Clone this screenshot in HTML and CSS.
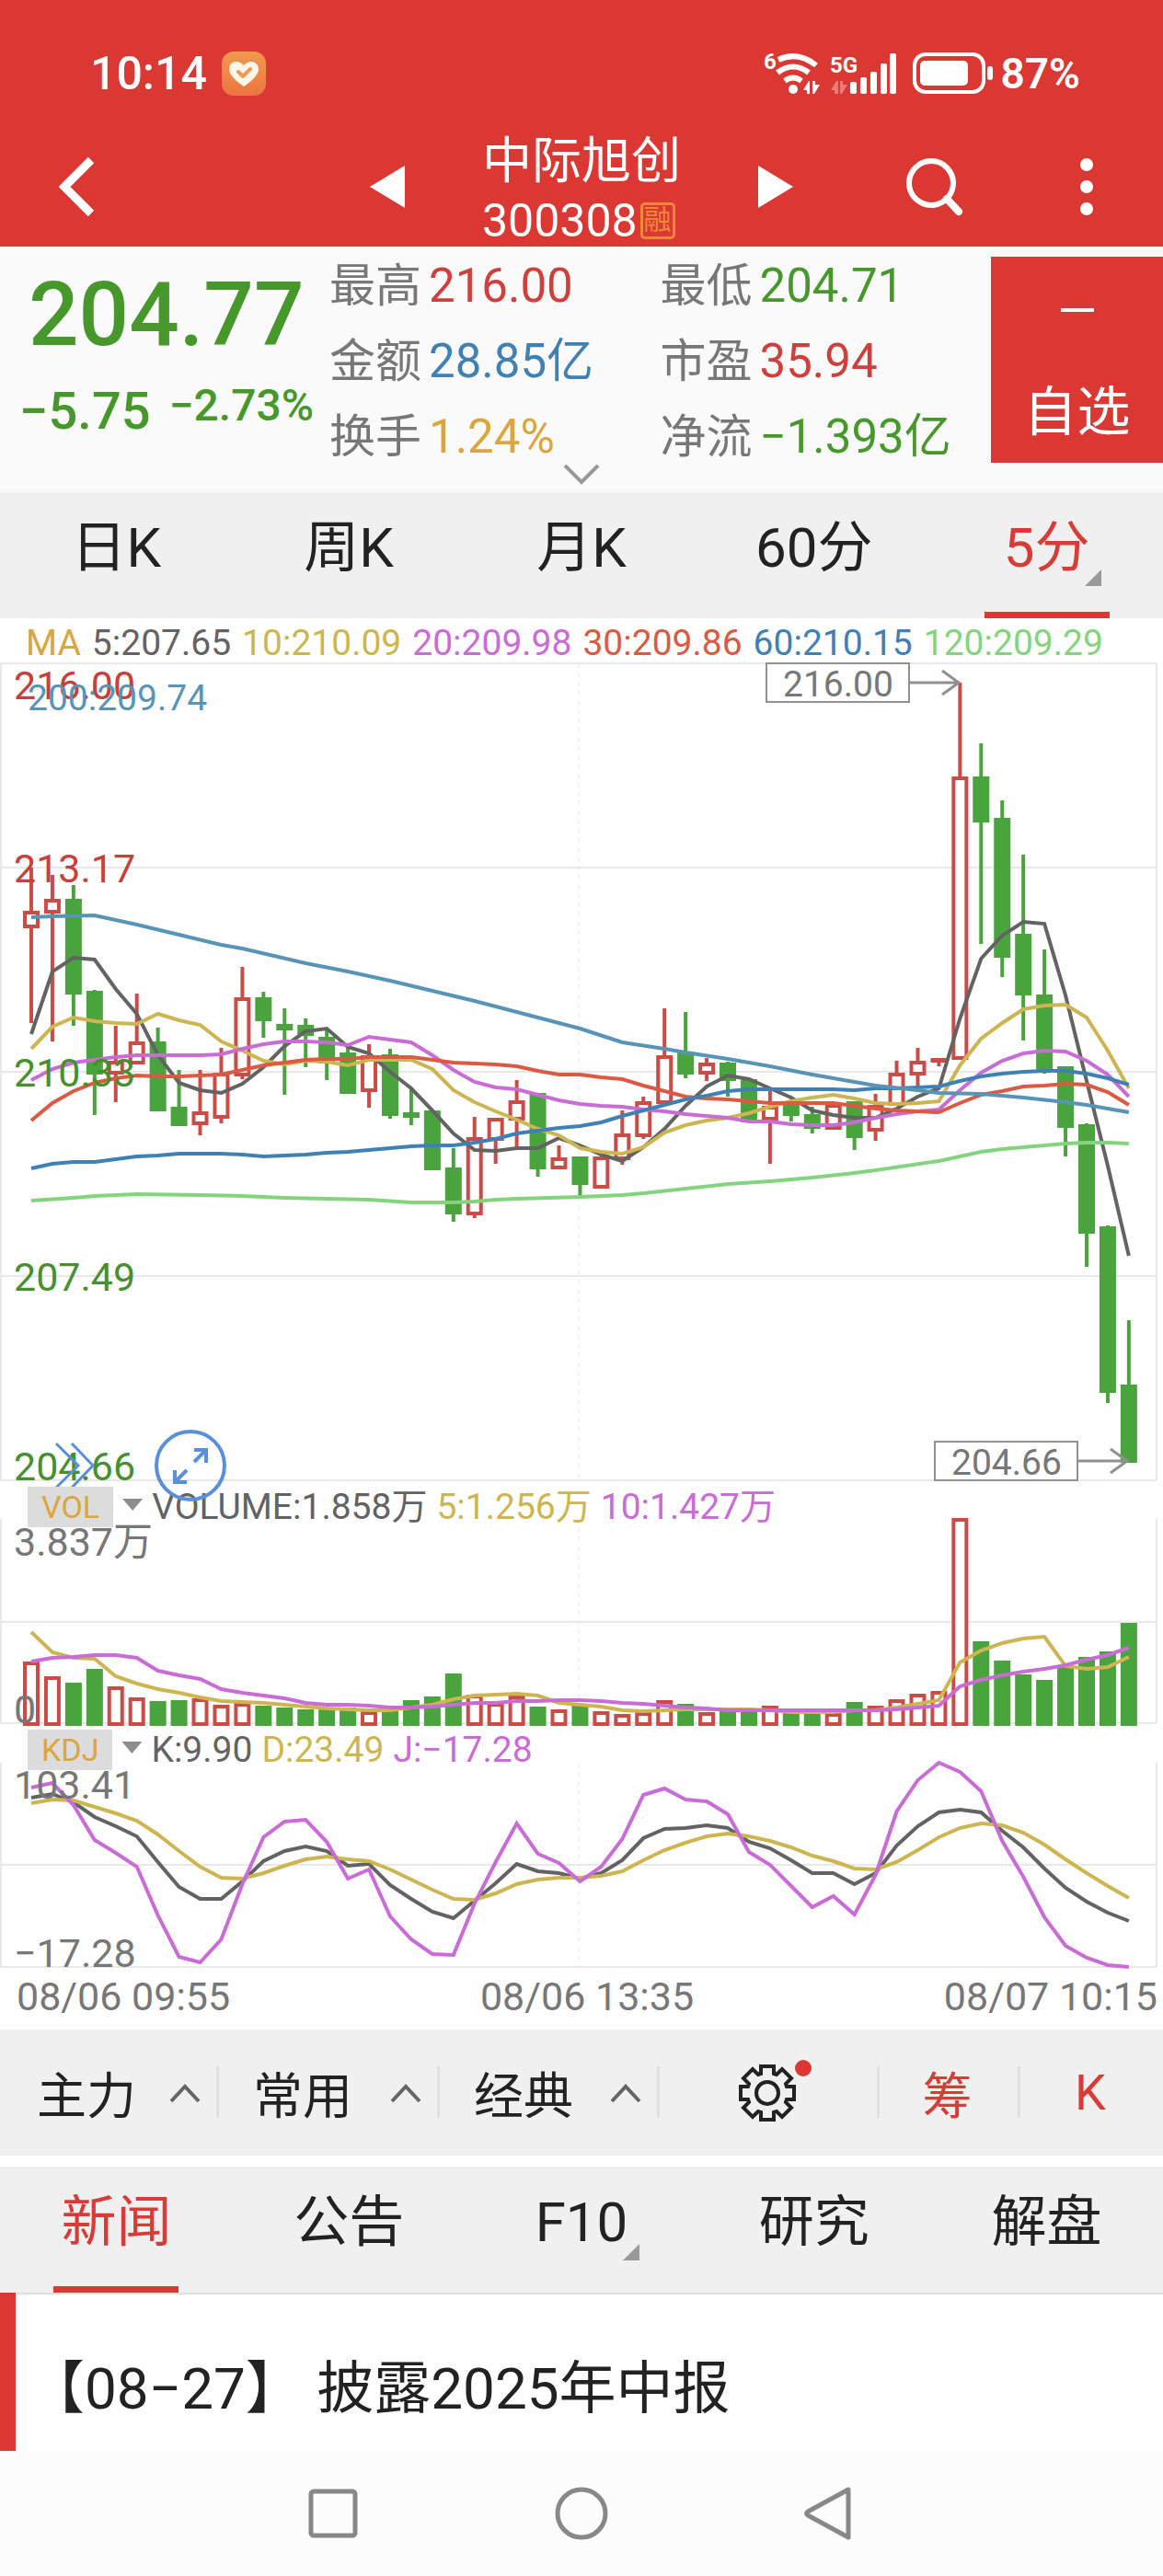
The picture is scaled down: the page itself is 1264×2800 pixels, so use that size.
FILE: index.html
```html
<!DOCTYPE html>
<html lang="zh-CN">
<head>
<meta charset="utf-8">
<meta name="viewport" content="width=device-width, initial-scale=1">
<title>中际旭创 300308</title>
<link rel="stylesheet" href="styles.css">
</head>
<body>
<header class="top">
  <div class="status">
    <span class="clock">10:14</span>
    <svg class="app-badge" width="48" height="48" viewBox="0 0 48 48">
      <defs><linearGradient id="og" x1="0" y1="0" x2="0" y2="1"><stop offset="0" stop-color="#f2994f"/><stop offset="1" stop-color="#ec7440"/></linearGradient></defs>
      <rect width="48" height="48" rx="13" fill="url(#og)"/>
      <path d="M24 38C14 31 8 25 8 19c0-5 4-8 8-8 3 0 6 2 8 4 2-2 5-4 8-4 4 0 8 3 8 8 0 6-6 12-16 19z" fill="#fff6ea"/>
      <path d="M18 22l5 5 8-8" fill="none" stroke="#ee9a52" stroke-width="4" stroke-linecap="round" stroke-linejoin="round"/>
    </svg>
    <svg class="signals" width="256" height="60" viewBox="824 49 256 60" fill="#fff">
      <text x="830" y="74" class="sig-text">6</text>
      <g fill="none" stroke="#fff" stroke-width="6">
        <path d="M846 64q21-10 41 6"/><path d="M845 78q17-13 34 0"/><path d="M853 87q9-7 18 0"/>
      </g>
      <circle cx="862" cy="96" r="5"/>
      <path d="M873 97l6-10h1v14h-3v-4zM891 91l-6 10h-2V87h3v4z"/>
      <text x="902" y="78" class="sig-text">5G</text>
      <path d="M903 97l6-10h2v14h-4v-4zM921 91l-6 10h-2V87h3v4z" opacity=".35"/>
      <g><rect x="924" y="88" width="7" height="13" rx="2"/><rect x="935" y="83" width="7" height="18" rx="2"/><rect x="946" y="77" width="7" height="24" rx="2"/><rect x="957" y="68" width="7" height="33" rx="2"/><rect x="967" y="57" width="7" height="44" rx="2"/></g>
      <rect x="994" y="58" width="75" height="41" rx="12" fill="none" stroke="#fff" stroke-width="4"/>
      <rect x="1000" y="65" width="52" height="27" rx="5"/>
      <rect x="1073" y="71" width="6" height="15" rx="3"/>
    </svg>
    <span class="battery">87%</span>
  </div>
  <nav class="titlebar">
    <button class="icon back" aria-label="返回"><svg width="44" height="68" viewBox="0 0 44 68"><path d="M37 5L8 34l29 29" fill="none" stroke="#fff" stroke-width="9"/></svg></button>
    <div class="stock">
      <button class="icon" aria-label="上一个"><svg width="38" height="46" viewBox="0 0 38 46"><path d="M38 0v46L0 23z" fill="#fff"/></svg></button>
      <div class="stock-name">
        <h1>中际旭创</h1>
        <p>300308<span class="tag">融</span></p>
      </div>
      <button class="icon" aria-label="下一个"><svg width="38" height="46" viewBox="0 0 38 46"><path d="M0 0v46l38-23z" fill="#fff"/></svg></button>
    </div>
    <div class="actions">
      <button class="icon" aria-label="搜索"><svg width="66" height="66" viewBox="0 0 66 66" fill="none" stroke="#fff" stroke-width="6"><circle cx="29" cy="29" r="24"/><path d="M46 46l13 14" stroke-width="8" stroke-linecap="round"/></svg></button>
      <button class="icon" aria-label="更多"><svg width="16" height="66" viewBox="0 0 16 66" fill="#fff"><circle cx="8" cy="9" r="7"/><circle cx="8" cy="33" r="7"/><circle cx="8" cy="57" r="7"/></svg></button>
    </div>
  </nav>
</header>

<section class="quote">
  <div class="price">
    <strong>204.77</strong>
    <div class="change"><span>−5.75</span><span class="pct">−2.73%</span></div>
  </div>
  <dl class="stats">
    <div><dt>最高</dt><dd class="up">216.00</dd></div>
    <div><dt>最低</dt><dd class="down">204.71</dd></div>
    <div><dt>金额</dt><dd class="blue">28.85亿</dd></div>
    <div><dt>市盈</dt><dd class="up">35.94</dd></div>
    <div><dt>换手</dt><dd class="gold">1.24%</dd></div>
    <div><dt>净流</dt><dd class="down">−1.393亿</dd></div>
  </dl>
  <button class="watch"><i></i>自选</button>
  <button class="icon more" aria-label="展开"><svg width="42" height="26" viewBox="0 0 42 26"><path d="M3 3l18 18L39 3" fill="none" stroke="#999" stroke-width="4"/></svg></button>
</section>

<nav class="tabs">
  <a href="#">日K</a><a href="#">周K</a><a href="#">月K</a><a href="#">60分</a><a href="#" class="on"><span class="drop">5分</span></a>
</nav>

<section class="charts">
  <div class="legend ma">
    <span class="gold">MA</span><span class="gray">5:207.65</span><span class="yellow">10:210.09</span><span class="purple">20:209.98</span><span class="orange">30:209.86</span><span class="blue">60:210.15</span><span class="lime">120:209.29</span>
  </div>
  <div class="panel">
    <svg id="price" viewBox="0 720 1264 894"></svg>
    <button class="icon fast" aria-label="快进"><svg width="44" height="50" viewBox="60 1568 44 50" fill="none" stroke="#5a8fdc" stroke-width="3"><path d="M61 1569l24 24-24 24M78 1569l23 24-23 24"/></svg></button>
    <button class="icon expand" aria-label="全屏"><svg width="78" height="78" viewBox="168 1554 78 78" fill="none" stroke="#5a8fdc" stroke-width="4"><circle cx="207" cy="1593" r="37"/><path d="M211 1576h13v14M224 1576l-13 13M190 1598v13h13M190 1611l13-13"/></svg></button>
  </div>
  <div class="legend sub">
    <button class="ind">VOL</button><i class="tri"></i><span class="gray">VOLUME:1.858万</span><span class="yellow">5:1.256万</span><span class="purple">10:1.427万</span>
  </div>
  <svg id="volume" viewBox="0 1650 1264 228"></svg>
  <div class="legend sub">
    <button class="ind">KDJ</button><i class="tri"></i><span class="gray">K:9.90</span><span class="yellow">D:23.49</span><span class="purple">J:−17.28</span>
  </div>
  <svg id="kdj" viewBox="0 1914 1264 226"></svg>
  <div class="dates"><time>08/06 09:55</time><time>08/06 13:35</time><time>08/07 10:15</time></div>
</section>

<div class="toolbar">
  <button class="menu">主力<svg width="34" height="22" viewBox="0 0 34 22"><path d="M2 20L17 4l15 16" /></svg></button>
  <button class="menu">常用<svg width="34" height="22" viewBox="0 0 34 22"><path d="M2 20L17 4l15 16" /></svg></button>
  <button class="menu">经典<svg width="34" height="22" viewBox="0 0 34 22"><path d="M2 20L17 4l15 16" /></svg></button>
  <button class="gear" aria-label="设置">
    <svg width="86" height="74" viewBox="-31 -37 86 74" fill="none" stroke="#222" stroke-width="4">
      <path d="M-7-21V-29H7V-21L10-20 16-26 26-16 20-10 21-7H29V7H21L20 10 26 16 16 26 10 20 7 21V29H-7V21L-10 20-16 26-26 16-20 10-21 7H-29V-7H-21L-20-10-26-16-16-26-10-20z"/><circle r="12"/>
      <circle cx="39" cy="-27" r="9" fill="#db3833" stroke="none"/>
    </svg>
  </button>
  <button class="red">筹</button>
  <button class="red">K</button>
</div>

<nav class="tabs news-tabs">
  <a href="#" class="on">新闻</a><a href="#">公告</a><a href="#"><span class="drop">F10</span></a><a href="#">研究</a><a href="#">解盘</a>
</nav>
<a class="news" href="#">【08−27】 披露2025年中报</a>

<nav class="system">
  <button class="icon" aria-label="最近任务"><svg width="60" height="60" viewBox="0 0 60 60"><rect x="6" y="6" width="48" height="48" rx="3"/></svg></button>
  <button class="icon" aria-label="主页"><svg width="60" height="60" viewBox="0 0 60 60"><circle cx="30" cy="30" r="26"/></svg></button>
  <button class="icon" aria-label="后退"><svg width="60" height="60" viewBox="0 0 60 60"><path d="M50 4v52L6 32q-3-2 0-4z" stroke-linejoin="round"/></svg></button>
</nav>
<script src="charts.js"></script>
</body>
</html>
```

FILE: styles.css
```css
* { box-sizing: border-box; }
body {
  margin: 0;
  background: #fefefe;
  color: #222;
  font-family: Roboto, "Noto Sans CJK SC", sans-serif;
}
button { margin: 0; padding: 0; border: 0; background: none; color: inherit; font: inherit; }
a { color: inherit; text-decoration: none; }
svg { display: block; }
.icon { display: flex; align-items: center; justify-content: center; }

.up { color: #cf403c; }
.down { color: #46982a; }
.gold { color: #dba63f; }
.gray { color: #636363; }
.yellow { color: #cdb651; }
.purple { color: #c96cd6; }
.orange { color: #d95b41; }
.blue { color: #3f80b5; }
.lime { color: #84d47f; }
.red { color: #d93c36; }

.top { background: #db3833; color: #fff; height: 268px; }
.status {
  display: flex;
  align-items: center;
  padding: 52px 90px 0 98px;
  height: 108px;
  font-weight: 500;
}
.clock { font-size: 50px; }
.app-badge { margin-left: 16px; }
.signals { margin-left: auto; }
.battery { margin-left: 8px; font-size: 46px; font-weight: 600; }
.sig-text { font: 700 24px Roboto, sans-serif; }
.titlebar {
  display: grid;
  grid-template-columns: 1fr auto 1fr;
  height: 160px;
  align-items: center;
  padding: 26px 62px 0;
}
.back { justify-self: start; }
.stock { display: flex; align-items: center; gap: 84px; }
.stock h1, .stock p { margin: 0; line-height: 64px; font-weight: 400; }
.stock-name { margin-top: 10px; }
.stock h1 { font-size: 54px; }
.stock p { display: flex; align-items: center; font-size: 50px; gap: 3px; }
.tag {
  width: 38px;
  height: 40px;
  border: 3px solid #f0883a;
  border-radius: 5px;
  color: #f0883a;
  font-size: 30px;
  line-height: 32px;
  text-align: center;
}
.actions { display: flex; justify-content: flex-end; gap: 124px; padding-right: 13px; }

.quote {
  position: relative;
  display: flex;
  height: 267px;
  background: #fafafa;
}
.price { width: 358px; padding: 18px 0 0 21px; color: #46982a; font-weight: 500; white-space: nowrap; }
.price strong { display: block; padding-left: 10px; font-size: 96px; font-weight: 500; line-height: 112px; }
.change { display: flex; align-items: center; gap: 20px; margin-top: 16px; font-size: 56px; line-height: 66px; }
.pct { margin-top: -12px; font-size: 48px; }
.stats {
  flex: 1;
  display: grid;
  grid-template-columns: 1fr 1fr;
  grid-auto-rows: 82px;
  margin: 2px 0 0;
  font-size: 50px;
  line-height: 82px;
  white-space: nowrap;
}
.stats div { display: flex; gap: 8px; }
.stats dt { color: #777; }
.stats dd { margin: 0; font-size: 51px; }
.watch {
  display: flex;
  flex-direction: column;
  align-items: center;
  justify-content: space-between;
  width: 187px;
  height: 224px;
  margin-top: 11px;
  padding: 56px 0 22px;
  background: #db3833;
  color: #fff;
  font-size: 58px;
  line-height: 66px;
}
.watch i { width: 36px; height: 4px; background: #fff; }
.more { position: absolute; left: calc(50% - 21px); bottom: 6px; }

.tabs {
  display: grid;
  grid-template-columns: repeat(5, 1fr);
  height: 137px;
  background: #f0f0f0;
  font-size: 60px;
  line-height: 122px;
  text-align: center;
}
.on { position: relative; color: #d93c36; }
.on::before {
  content: "";
  position: absolute;
  left: calc(50% - 68px);
  bottom: 0;
  width: 136px;
  height: 7px;
  background: #db3833;
}
.drop { position: relative; }
.drop::after {
  content: "";
  position: absolute;
  right: -13px;
  bottom: -6px;
  border: solid transparent;
  border-width: 9px;
  border-right-color: #999;
  border-bottom-color: #999;
}

.charts svg { width: 100%; overflow: visible; }
.charts button svg { width: auto; }
.legend { display: flex; font-size: 39px; white-space: nowrap; }
.ma { height: 48px; padding-left: 28px; gap: 12px; line-height: 54px; }
.sub { position: relative; z-index: 1; height: 36px; padding: 2px 0 0 30px; gap: 10px; line-height: 44px; }
.ind {
  height: 44px;
  padding: 0 15px;
  background: #dcdcdc;
  color: #dba63f;
  font-size: 34px;
}
.tri { width: 22px; height: 13px; margin: 13px 0 0; background: #8e8e8e; clip-path: polygon(0 0, 100% 0, 50% 100%); }
.panel { position: relative; }
.fast { position: absolute; left: 60px; bottom: -4px; }
.expand { position: absolute; left: 168px; bottom: -18px; z-index: 2; }
.axis { font: 43px Roboto, "Noto Sans CJK SC", sans-serif; }
.small { font-size: 39px; }
.dates {
  display: flex;
  justify-content: space-between;
  height: 66px;
  padding: 0 6px 0 18px;
  color: #777;
  font-size: 43px;
  line-height: 61px;
}

.toolbar {
  display: grid;
  grid-template-columns: 235fr 240fr 239fr 239fr 153fr 158fr;
  height: 137px;
  background: #f0f0f0;
  font-size: 54px;
}
.toolbar button { position: relative; display: flex; align-items: center; justify-content: center; }
.toolbar button + button::before {
  content: "";
  position: absolute;
  left: 0;
  top: 40px;
  width: 3px;
  height: 56px;
  background: #e0e0e0;
}
.toolbar .menu { justify-content: space-between; padding: 0 17px 0 40px; }
.menu path { fill: none; stroke: #666; stroke-width: 4; }
.gear svg { margin-left: 24px; }

.news-tabs { margin-top: 12px; }
.news {
  display: block;
  height: 172px;
  padding-left: 13px;
  border-left: 17px solid #db3833;
  box-shadow: inset 0 2px #e0e0e0;
  font-size: 62px;
  line-height: 210px;
  white-space: pre;
}
.system {
  display: flex;
  justify-content: center;
  gap: 210px;
  height: 136px;
  background: #fcfcfc;
}
.system svg { fill: none; stroke: #888; stroke-width: 5; }
```

FILE: charts.js
```javascript
const RED = "#cb4c47", GREEN = "#4aa43e", GRAY = "#636363", YELLOW = "#cdb651",
  PURPLE = "#c96cd6", ORANGE = "#dc5a43", BLUE = "#3f80b5", LIME = "#84d47f", STEEL = "#5794b6";

const STEP = 22.94, FIRST = 34;
const xAt = i => FIRST + i * STEP;

// Rows: direction (1 = rise), high, body top, body bottom, low
const candles = [
  [1,943,990,1009,1112],[1,951,977,993,1132],[0,962,977,1081,1115],[0,1076,1077,1168,1212],
  [1,1115,1153,1168,1198],[1,1080,1132,1157,1157],[0,1117,1132,1208,1208],[0,1163,1203,1224,1224],
  [1,1163,1208,1223,1234],[1,1139,1166,1216,1221],[1,1051,1084,1170,1173],[0,1078,1084,1110,1128],
  [0,1096,1113,1120,1190],[0,1107,1114,1126,1160],[0,1120,1127,1156,1174],[0,1137,1144,1189,1189],
  [1,1135,1147,1187,1204],[0,1140,1146,1213,1216],[0,1182,1209,1215,1223],[0,1207,1207,1272,1272],
  [0,1248,1269,1320,1328],[1,1214,1236,1321,1324],[1,1215,1215,1240,1265],[1,1174,1196,1218,1247],
  [0,1188,1188,1271,1279],[1,1245,1258,1271,1271],[0,1257,1257,1288,1299],[1,1257,1257,1292,1292],
  [1,1207,1232,1261,1266],[1,1192,1197,1236,1238],[1,1096,1147,1200,1200],[0,1100,1143,1168,1172],
  [1,1150,1155,1168,1175],[0,1154,1155,1175,1192],[0,1173,1173,1220,1220],[1,1186,1202,1218,1265],
  [0,1195,1200,1213,1219],[0,1203,1211,1227,1232],[1,1200,1200,1228,1228],[0,1197,1197,1237,1250],
  [1,1189,1201,1230,1240],[1,1153,1166,1202,1202],[1,1139,1153,1169,1182],[1,1150,1150,1155,1159],
  [1,742,844,1152,1152],[0,808,844,894,1026],[0,870,889,1041,1062],[0,929,1015,1082,1131],
  [0,1032,1081,1166,1167],[0,1159,1159,1226,1257],[0,1221,1222,1341,1377],[0,1332,1333,1514,1525],
  [0,1435,1505,1590,1590]
];
const ma5 = [1124,1056,1041,1043,1075,1102,1147,1177,1185,1188,1178,1160,1137,1121,1118,1138,1145,1165,1183,1207,1232,1250,1251,1248,1248,1237,1245,1255,1262,1247,1227,1202,1181,1169,1173,1183,1193,1207,1212,1215,1215,1205,1192,1183,1107,1042,1017,1002,1004,1082,1175,1267,1365];
const ma10 = [1140,1116,1106,1110,1112,1113,1102,1109,1114,1132,1142,1153,1157,1153,1154,1158,1152,1152,1152,1162,1185,1198,1208,1217,1227,1234,1248,1252,1254,1247,1231,1223,1218,1215,1210,1203,1197,1193,1190,1194,1199,1200,1199,1197,1158,1129,1112,1097,1093,1092,1106,1142,1183];
const ma20 = [1174,1162,1155,1152,1149,1147,1147,1147,1147,1146,1140,1135,1132,1132,1133,1136,1127,1130,1133,1147,1163,1176,1182,1184,1190,1196,1200,1202,1203,1206,1208,1211,1213,1215,1219,1219,1222,1223,1223,1220,1215,1211,1208,1206,1185,1166,1153,1145,1142,1143,1153,1168,1192];
const ma30 = [1218,1199,1186,1177,1172,1169,1170,1170,1169,1168,1163,1158,1155,1152,1151,1151,1149,1149,1149,1152,1155,1156,1157,1159,1164,1168,1168,1171,1173,1180,1186,1192,1194,1195,1197,1199,1199,1199,1199,1202,1205,1207,1208,1209,1199,1190,1186,1181,1180,1178,1179,1187,1201];
const ma60 = [1270,1265,1263,1263,1260,1257,1256,1254,1254,1254,1255,1257,1256,1255,1253,1252,1250,1248,1246,1245,1245,1242,1238,1232,1229,1226,1224,1220,1213,1207,1201,1195,1191,1186,1184,1184,1184,1184,1184,1185,1183,1183,1182,1181,1175,1170,1167,1165,1164,1164,1167,1172,1179];
// The slow averages are stored as [index, y] where the slope changes
const ma120 = [[0,1305],[2,1302],[3,1300],[5,1298],[8,1299],[10,1300],[12,1302],[14,1303],[16,1304],[18,1307],[20,1307],[21,1306],[22,1304],[23,1303],[26,1301],[28,1299],[29,1297],[31,1292],[33,1287],[35,1284],[37,1280],[39,1275],[40,1272],[43,1262],[44,1257],[45,1252],[46,1249],[47,1247],[48,1245],[49,1243],[50,1242],[51,1242],[52,1243]];
const ma200 = [[0,997],[1,996],[3,995],[5,1005],[7,1016],[9,1027],[10,1031],[13,1047],[15,1056],[17,1066],[19,1077],[21,1088],[23,1100],[25,1112],[26,1118],[28,1133],[30,1140],[31,1144],[33,1151],[35,1159],[37,1168],[39,1176],[40,1180],[42,1185],[43,1188],[45,1189],[47,1193],[49,1198],[50,1201],[52,1209]];

const volumes = [1806,1822,1829,1814,1833,1845,1849,1848,1846,1853,1851,1854,1856,1858,1857,1856,1860,1860,1848,1844,1819,1842,1851,1843,1855,1858,1853,1860,1863,1861,1848,1852,1861,1857,1860,1854,1862,1861,1862,1850,1854,1847,1841,1838,1650,1784,1805,1820,1826,1812,1801,1795,1764];
const vol5 = [1774,1796,1802,1803,1822,1830,1836,1840,1845,1849,1850,1851,1853,1855,1857,1858,1859,1859,1856,1853,1847,1843,1842,1841,1843,1851,1853,1855,1859,1860,1859,1858,1858,1858,1858,1859,1861,1861,1861,1859,1859,1856,1852,1848,1807,1794,1786,1781,1779,1811,1814,1812,1801];
const vol10 = [1806,1802,1801,1799,1799,1802,1816,1821,1825,1836,1840,1843,1846,1851,1853,1853,1854,1856,1856,1855,1853,1851,1851,1849,1849,1848,1848,1849,1851,1852,1854,1856,1857,1859,1859,1859,1859,1859,1859,1859,1859,1858,1856,1854,1833,1826,1821,1817,1814,1810,1804,1799,1791];

const lineK = [1954,1950,1959,1975,1985,1996,2024,2051,2064,2064,2045,2023,2012,2007,2012,2028,2026,2049,2064,2078,2085,2066,2047,2026,2034,2036,2042,2036,2022,1998,1988,1987,1984,1987,2002,2009,2022,2036,2036,2048,2036,2006,1985,1970,1967,1970,1990,2008,2031,2052,2067,2079,2088];
const lineD = [1960,1956,1957,1964,1971,1979,1994,2012,2029,2041,2042,2036,2028,2021,2018,2021,2023,2032,2043,2054,2064,2065,2058,2048,2043,2041,2041,2039,2034,2022,2011,2003,1996,1993,1996,2001,2008,2017,2023,2031,2032,2024,2011,1997,1987,1982,1984,1992,2005,2021,2036,2050,2063];
const lineJ = [1943,1938,1962,2000,2014,2029,2082,2127,2133,2108,2048,1997,1980,1978,2002,2042,2032,2083,2108,2124,2125,2069,2024,1982,2015,2025,2045,2029,1999,1951,1944,1956,1958,1972,2013,2027,2050,2073,2061,2081,2038,1969,1935,1916,1926,1947,2001,2040,2084,2115,2128,2136,2138];

const line = (data, color) => {
  const pts = data.map((d, i) => Array.isArray(d) ? `${xAt(d[0])},${d[1]}` : `${xAt(i)},${d}`);
  return `<polyline points="${pts.join(" ")}" fill="none" stroke="${color}" stroke-width="4"/>`;
};
const bar = (i, rise, top, bottom) => rise
  ? `<rect x="${xAt(i) - 7}" y="${top + 2}" width="14" height="${Math.max(1, bottom - top - 4)}" fill="#fefefe" stroke="${RED}" stroke-width="4"/>`
  : `<rect x="${xAt(i) - 9}" y="${top}" width="18" height="${bottom - top}" fill="${GREEN}"/>`;
const label = (x, y, text, color, cls = "") =>
  `<text class="axis ${cls}" x="${x}" y="${y}" fill="${color}">${text}</text>`;
const grid = (top, bottom, rows) =>
  `<g stroke="#e8e8e8" stroke-width="2"><path d="M1 ${top}V${bottom}M1257 ${top}V${bottom}"/>` +
  rows.map(y => `<path d="M0 ${y}H1257"/>`).join("") +
  `<path d="M629 ${top}V${bottom}" stroke-width="1" stroke-dasharray="5 5"/></g>`;
const callout = (x, y, text, tip) =>
  `<g fill="none" stroke="#909090"><rect x="${x}" y="${y}" width="155" height="42" fill="#fefefe" stroke-width="2"/>` +
  `<path d="M${x + 155} ${y + 21}H${tip}M${tip - 18} ${y + 8}L${tip} ${y + 21}L${tip - 18} ${y + 34}" stroke-width="3"/></g>` +
  label(x + 18, y + 36, text, "#777", "small");

document.getElementById("price").innerHTML =
  grid(721, 1609, [721, 943, 1165, 1387, 1609]) +
  candles.map(([rise, high, top, bottom, low], i) =>
    `<path d="M${xAt(i)} ${high}V${low}" stroke="${rise ? RED : GREEN}" stroke-width="4"/>` +
    bar(i, rise, top, bottom)).join("") +
  line(ma5, GRAY) + line(ma10, YELLOW) + line(ma20, PURPLE) + line(ma30, ORANGE) +
  line(ma60, BLUE) + line(ma120, LIME) + line(ma200, STEEL) +
  label(15, 760, "216.00", "#c8403c") + label(15, 959, "213.17", "#c8403c") +
  label(15, 1181, "210.33", "#46902e") + label(15, 1403, "207.49", "#46902e") +
  label(15, 1609, "204.66", "#46902e") + label(30, 772, "200:209.74", STEEL, "small") +
  callout(833, 721, "216.00", 1042) + callout(1016, 1567, "204.66", 1225);

document.getElementById("volume").innerHTML =
  grid(1651, 1873, [1763, 1873]) +
  volumes.map((top, i) => bar(i, candles[i][0], top, 1876)).join("") +
  line(vol5, YELLOW) + line(vol10, PURPLE) +
  label(15, 1691, "3.837万", "#777") + label(15, 1873, "0", "#777");

document.getElementById("kdj").innerHTML =
  grid(1916, 2138, [2027, 2138]) +
  line(lineK, GRAY) + line(lineD, YELLOW) + line(lineJ, PURPLE) +
  label(15, 1955, "103.41", "#777") + label(15, 2138, "−17.28", "#777");
```
